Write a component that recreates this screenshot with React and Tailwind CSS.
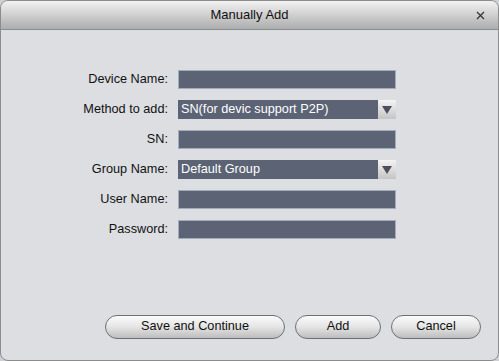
import React from 'react';

const fields = [
    { label: 'Device Name:', type: 'input' },
    { label: 'Method to add:', type: 'select', value: 'SN(for devic support P2P)' },
    { label: 'SN:', type: 'input' },
    { label: 'Group Name:', type: 'select', value: 'Default Group' },
    { label: 'User Name:', type: 'input' },
    { label: 'Password:', type: 'input' },
];

const Arrow = () => (
    <div className="w-[18px] h-full bg-gradient-to-b from-[#f4f4f4] to-[#c4c4c4] flex items-center justify-center">
        <svg width="10" height="8" viewBox="0 0 10 8">
            <path d="M0 0 L10 0 L5 8 Z" fill="#4a4f5a" />
        </svg>
    </div>
);

const Field = ({ label, type, value }) => (
    <div className="flex items-center h-[19px]">
        <div className="w-[168px] pr-[1px] text-right text-[12.7px] text-[#111]">{label}</div>
        <div className="ml-[9px] w-[218px] h-[19px]">
            {type === 'input' ? (
                <div className="w-full h-full bg-[#5b6375] border border-[#a4abba]" />
            ) : (
                <div className="w-full h-full bg-[#5b6375] flex">
                    <div className="flex-1 pl-[3px] text-[12.7px] leading-[19px] text-white">{value}</div>
                    <Arrow />
                </div>
            )}
        </div>
    </div>
);

const Btn = ({ children, w }) => (
    <button className={`${w} h-[24px] rounded-full border border-[#6f6f6f] bg-gradient-to-b from-[#fbfbfb] via-[#e4e4e4] to-[#bdbdbd] text-[12.7px] text-[#111]`}>
        {children}
    </button>
);

export default function App() {
    return (
        <div className="w-[499px] h-[361px] bg-[#cfd0d4] font-['Liberation_Sans',Arial,sans-serif]">
            <div className="w-full h-full flex flex-col rounded-t-[8px] rounded-b-[8px] overflow-hidden border border-[#8c8c8c] bg-[#dcdee2]">
                <div className="h-[29px] shrink-0 relative flex items-center justify-center border-b border-[#8d8d8d] bg-gradient-to-b from-[#f2f2f2] to-[#adadad]">
                    <span className="text-[13px] text-[#111]">Manually Add</span>
                    <svg className="absolute right-[13px] top-[10px]" width="9" height="9" viewBox="0 0 9 9">
                        <path d="M1 1 L8 8 M8 1 L1 8" stroke="#333" strokeWidth="1.2" />
                    </svg>
                </div>
                <div className="flex-1 flex flex-col">
                    <div className="pt-[40px] flex flex-col gap-[11px]">
                        {fields.map((f) => (
                            <Field key={f.label} {...f} />
                        ))}
                    </div>
                    <div className="mt-auto mb-[21px] flex justify-end gap-[10px] pr-[17px]">
                        <Btn w="w-[180px]">Save and Continue</Btn>
                        <Btn w="w-[86px]">Add</Btn>
                        <Btn w="w-[90px]">Cancel</Btn>
                    </div>
                </div>
            </div>
        </div>
    );
}
